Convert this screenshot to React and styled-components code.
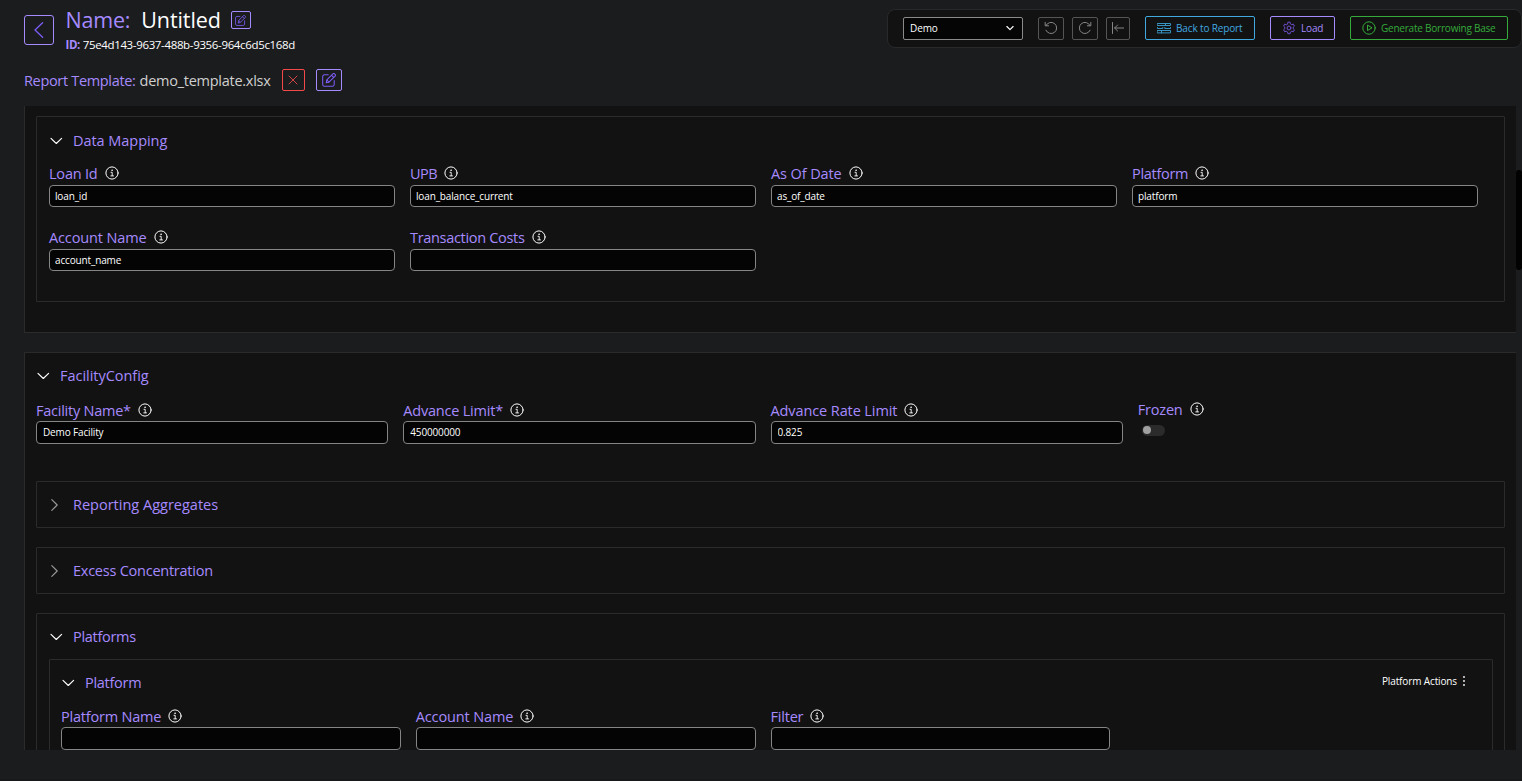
import { useState } from "react";
import styled, { createGlobalStyle } from "styled-components";

const GlobalStyle = createGlobalStyle`
    * {
        box-sizing: border-box;
    }

    body {
        margin: 0;
        background: #1b1c1e;
        color: #fff;
        font-family: "Open Sans", "Noto Sans", sans-serif;
        overflow: hidden;
    }

    button, input {
        font-family: inherit;
    }
`;

const Page = styled.div`
    height: 781px;
    display: flex;
    flex-direction: column;
    border-bottom: 2px solid #17181a;
`;

const Header = styled.header`
    height: 62px;
    display: flex;
    justify-content: space-between;
    align-items: flex-start;
    padding: 9px 0 0 24px;
`;

const Identity = styled.div`
    display: flex;

    .name {
        display: flex;
        align-items: center;
        height: 22px;
        font-size: 21.5px;
    }

    .name .label,
    .name .value {
        margin-top: -2px;
    }

    .name .label {
        letter-spacing: -0.2px;
        margin-right: 11px;
    }

    .name .value {
        letter-spacing: -0.1px;
        margin-right: 10px;
    }

    .label {
        color: #a68aff;
    }

    .id {
        height: 16px;
        line-height: 16px;
        margin-top: 6px;
        font-size: 11.5px;
        font-weight: 500;
        letter-spacing: -0.35px;
    }

    .id .label {
        font-weight: 700;
    }
`;

const BackButton = styled.button`
    width: 30px;
    height: 30px;
    margin: 6px 11.5px 0 0;
    padding: 0;
    display: flex;
    align-items: center;
    justify-content: center;
    border: 1px solid #a68aff;
    border-radius: 3px;
    background: transparent;
    color: #7d5cf5;
`;

const IconButton = styled.button`
    width: ${p => p.$w}px;
    height: ${p => p.$h}px;
    padding: 0;
    flex: none;
    display: flex;
    align-items: center;
    justify-content: center;
    border: 1px solid ${p => p.$border};
    border-radius: 2px;
    background: transparent;
    color: ${p => p.$color || p.$border};
`;

const Toolbar = styled.div`
    height: 39px;
    width: 635px;
    display: flex;
    align-items: center;
    padding: 0 0 1px 15px;
    border: 1px solid #28292b;
    border-radius: 8px;
    background: #121212;
`;

const Select = styled.div`
    width: 120px;
    height: 23px;
    flex: none;
    margin-right: 15px;
    display: flex;
    align-items: center;
    justify-content: space-between;
    padding: 0 8px 0 6px;
    border: 1px solid #8a8a8a;
    border-radius: 2px;
    background: #050505;
    font-size: 10px;
    letter-spacing: -0.1px;
`;

const History = styled.div`
    display: flex;
    gap: 8px;
    margin-right: 15px;
`;

const ActionButton = styled.button`
    width: ${p => p.$w}px;
    height: 24px;
    flex: none;
    padding: 0 0 0 11px;
    display: flex;
    align-items: center;
    gap: 5px;
    border: 1px solid ${p => p.$color};
    border-radius: 2px;
    background: transparent;
    color: ${p => p.$color};
    font-size: 10px;
    font-weight: 500;
    line-height: 14px;
    letter-spacing: ${p => p.$track || -0.14}px;
    white-space: nowrap;

    & + & {
        margin-left: 15px;
    }

    svg {
        color: ${p => p.$icon || p.$color};
    }
`;

const TemplateRow = styled.div`
    height: 44px;
    display: flex;
    align-items: flex-start;
    padding: 7px 0 0 24px;
    font-size: 14.5px;
    line-height: 23px;

    .label {
        color: #a68aff;
        letter-spacing: -0.33px;
        margin-right: 4px;
    }

    .file {
        color: #d0d0d0;
        letter-spacing: -0.26px;
        margin-right: 11px;
    }

    button + button {
        margin-left: 11px;
    }
`;

const Body = styled.div`
    display: flex;
    height: 644px;
    padding-left: 24px;
`;

const Content = styled.main`
    width: 1492px;
    height: 644px;
    overflow: hidden;
`;

const Scroll = styled.div`
    width: 6px;
    padding-top: 64px;
`;

const Thumb = styled.div`
    height: 100px;
    border-radius: 3px;
    background: #020202;
`;

const Panel = styled.section`
    height: ${p => p.$h}px;
    margin-bottom: ${p => p.$gap || 0}px;
    padding: ${p => p.$pad || "0 11px"};
    border: 1px solid #2b2b2b;
    border-width: ${p => p.$borders || "1px"};
    border-radius: ${p => p.$radius || 0}px;
    background: #121212;
`;

const SectionHead = styled.div`
    height: ${p => p.$h}px;
    display: flex;
    align-items: center;
    padding-left: ${p => p.$indent || 0}px;

    .chevron {
        width: 14px;
        height: 14px;
        margin-right: 10px;
        display: flex;
        align-items: center;
        color: ${p => (p.$open ? "#fff" : "#9a9a9a")};
    }

    .title {
        flex: 1;
        color: #a68aff;
        font-size: 14.5px;
        line-height: 20px;
        letter-spacing: ${p => p.$track || 0}px;
    }
`;

const Actions = styled.div`
    display: flex;
    align-items: center;
    gap: 4px;
    margin: -3px 25px 0 0;
    font-size: 10px;
    font-weight: 500;
    line-height: 14px;
    letter-spacing: -0.13px;
`;

const Fields = styled.div`
    display: grid;
    grid-template-columns: repeat(4, 1fr);
    column-gap: 15px;
    row-gap: 22px;
    padding: ${p => p.$pad};
`;

const FieldBox = styled.div`
    min-width: 0;

    .head {
        height: 20px;
        display: flex;
        align-items: center;
        gap: 7px;
        color: #a68aff;
        font-size: 14.5px;
        line-height: 18px;
        letter-spacing: ${p => p.$track || -0.08}px;
        white-space: nowrap;
    }

    .head span {
        margin-top: ${p => 2 * (p.$lift || 0)}px;
    }

    .head svg {
        color: #fff;
        margin-top: ${p => -3 + (p.$lift || 0)}px;
    }
`;

const Input = styled.input`
    display: block;
    width: 100%;
    height: ${p => p.$h}px;
    padding: ${p => (p.$h > 22 ? "0 6px 1px" : "0 5px 1px")};
    border: 1px solid #858585;
    border-radius: 4px;
    background: #040404;
    color: #fff;
    font-size: 10px;
    font-weight: 500;
    letter-spacing: -0.15px;
    outline: none;
`;

const Toggle = styled.button`
    display: flex;
    align-items: center;
    justify-content: ${p => (p.$on ? "flex-end" : "flex-start")};
    width: 23px;
    height: 11px;
    margin: 4px 0 0 4px;
    padding: 0 1px 1px;
    border: 0;
    border-radius: 6px;
    background: #2b2b2b;

    span {
        width: 8px;
        height: 8px;
        border-radius: 50%;
        background: #a0a0a0;
    }
`;

const Svg = ({ size = 14, height, box = 14, boxHeight, stroke = 1, children }) => (
    <svg width={size} height={height || size} viewBox={`0 0 ${box} ${boxHeight || box}`} fill="none" stroke="currentColor"
        strokeWidth={stroke} strokeLinecap="round" strokeLinejoin="round">
        {children}
    </svg>
);

const InfoIcon = () => (
    <Svg stroke={1}>
        <circle cx="7" cy="7" r="6.1" />
        <path d="M6 6.3h1.2v3.4M5.8 9.9h2.7" strokeWidth="0.9" />
        <circle cx="7" cy="4.2" r="0.3" fill="currentColor" strokeWidth="0.8" />
    </Svg>
);

const EditIcon = ({ size }) => (
    <Svg size={size} stroke={1.05}>
        <path d="M6.2 1.8H2.4C1.4 1.8 .7 2.5 .7 3.5v8.1c0 1 .7 1.7 1.7 1.7h8.1c1 0 1.7-.7 1.7-1.7V7.4" />
        <path d="M4.2 9.8l.6-2.9L10.9.9c.5-.5 1.2-.5 1.7 0l.5.5c.5.5.5 1.2 0 1.7L7 9.2z" />
        <path d="M9.6 2.3l2.1 2.1M5 7.2l1.8 1.8" />
    </Svg>
);

const UndoIcon = () => (
    <Svg stroke={1}>
        <path d="M1.9 4.7A5.6 5.6 0 1 1 1.9 9.2" />
        <path d="M1.2 1.4v3.4h3.4" />
    </Svg>
);

const RedoIcon = () => (
    <Svg stroke={1}>
        <path d="M12.1 4.7A5.6 5.6 0 1 0 12.1 9.2" />
        <path d="M12.8 1.4v3.4H9.4" />
    </Svg>
);

const ResetIcon = () => (
    <Svg stroke={1}>
        <path d="M1.5 1.5v11M12.6 7H3.6M6.6 4L3.6 7l3 3" />
    </Svg>
);

const BricksIcon = () => (
    <Svg size={14} height={12} box={14} boxHeight={12}>
        <path d="M.5 1.5h13v2H.5zM8.5 1.5v2M.5 5.5v1h5.3v-1M7.8 5.5v1h5.7v-1M.5 8.5h13v2.4H.5zM4.5 8.5v2.4" />
    </Svg>
);

const GearIcon = () => (
    <Svg size={14} box={24} stroke={1.6}>
        <path d="M9.6 4.9 10.1 2h3.8l.5 2.9 2.4 1.4 2.6-1 1.9 3.4-2.1 1.8v2.8l2.1 1.8-1.9 3.4-2.6-1-2.4 1.4-.5 2.9h-3.8l-.5-2.9-2.4-1.4-2.6 1-1.9-3.4 2.1-1.8v-2.8L2.7 8.7l1.9-3.4 2.6 1z" />
        <circle cx="12" cy="12" r="3.3" />
    </Svg>
);

const PlayIcon = () => (
    <Svg>
        <circle cx="7" cy="7" r="6.2" />
        <path d="M5.5 4.5v5L9.7 7z" />
    </Svg>
);

const Chevron = ({ open }) => (
    <Svg stroke={1.15}>{open ? <path d="M2 4.3l5.3 5.2 5.3-5.2" /> : <path d="M2.8 1.6L8.2 7l-5.4 5.4" />}</Svg>
);

const Section = ({ title, open, h, indent, track, children }) => (
    <SectionHead $h={h} $indent={indent} $open={open} $track={track}>
        <span className="chevron"><Chevron open={open} /></span>
        <span className="title">{title}</span>
        {children}
    </SectionHead>
);

const Field = ({ label, value = "", track, lift, h = 22, children }) => (
    <FieldBox $track={track} $lift={lift}>
        <div className="head"><span>{label}</span> <InfoIcon /></div>
        {children || <Input $h={h} defaultValue={value} />}
    </FieldBox>
);

const mappings = [
    { label: "Loan Id", value: "loan_id", track: -0.2 },
    { label: "UPB", value: "loan_balance_current", track: -0.5 },
    { label: "As Of Date", value: "as_of_date", track: -0.1 },
    { label: "Platform", value: "platform", track: -0.3 },
    { label: "Account Name", value: "account_name", track: -0.12 },
    { label: "Transaction Costs", track: -0.31 },
];

const App = () => {
    const [frozen, setFrozen] = useState(false);

    return (
        <Page>
            <GlobalStyle />
            <Header>
                <Identity>
                    <BackButton>
                        <Svg size={16} box={16} stroke={1.3}><path d="M11.6 .8L4 8l7.6 7.2" /></Svg>
                    </BackButton>
                    <div>
                        <div className="name">
                            <span className="label">Name:</span>
                            <span className="value">Untitled</span>
                            <IconButton $w={20} $h={18} $border="#a68aff" $color="#7d5cf5"><EditIcon size={11} /></IconButton>
                        </div>
                        <div className="id"><span className="label">ID:</span> 75e4d143-9637-488b-9356-964c6d5c168d</div>
                    </div>
                </Identity>
                <Toolbar>
                    <Select>
                        Demo
                        <Svg size={8} box={9} stroke={1.3}><path d="M1 2.8L4.5 6.3 8 2.8" /></Svg>
                    </Select>
                    <History>
                        <IconButton $w={26} $h={23} $border="#555" $color="#858585"><UndoIcon /></IconButton>
                        <IconButton $w={26} $h={23} $border="#555" $color="#858585"><RedoIcon /></IconButton>
                        <IconButton $w={24} $h={23} $border="#555" $color="#858585"><ResetIcon /></IconButton>
                    </History>
                    <ActionButton $w={110} $color="#41a9e0" $icon="#3793c2"><BricksIcon />Back to Report</ActionButton>
                    <ActionButton $w={65} $color="#a68aff" $icon="#7553d8"><GearIcon />Load</ActionButton>
                    <ActionButton $w={158} $color="#35ab3b" $track={-0.22}><PlayIcon />Generate Borrowing Base</ActionButton>
                </Toolbar>
            </Header>

            <TemplateRow>
                <span className="label">Report Template:</span>
                <span className="file">demo_template.xlsx</span>
                <IconButton $w={23} $h={22} $border="#f5484a" $color="#d54545">
                    <Svg size={10} box={10}><path d="M1 1l8 8M9 1L1 9" /></Svg>
                </IconButton>
                <IconButton $w={26} $h={22} $border="#a68aff" $color="#7d5cf5"><EditIcon size={14} /></IconButton>
            </TemplateRow>

            <Body>
                <Content>
                    <Panel $h={227} $gap={19} $borders="0 0 1px 1px" $pad="10px 11px 0">
                        <Panel $h={186} $pad="0" $radius={1}>
                            <Section title="Data Mapping" open h={47} indent={12} track={-0.05} />
                            <Fields $pad="1px 26px 0 12px">
                                {mappings.map(m => <Field key={m.label} lift={-1} {...m} />)}
                            </Fields>
                        </Panel>
                    </Panel>

                    <Panel $h={500} $borders="1px 0 0 1px" $radius={1}>
                        <Section title="FacilityConfig" open h={46} track={-0.03} />
                        <Fields $pad="2px 15px 37px 0">
                            <Field label="Facility Name*" value="Demo Facility" track={-0.24} h={23} />
                            <Field label="Advance Limit*" value="450000000" track={-0.2} h={23} />
                            <Field label="Advance Rate Limit" value="0.825" track={-0.1} h={23} />
                            <Field label="Frozen" track={-0.2} lift={-1}>
                                <Toggle $on={frozen} onClick={() => setFrozen(!frozen)}><span /></Toggle>
                            </Field>
                        </Fields>
                        <Panel $h={47} $gap={19} $pad="0" $radius={1}>
                            <Section title="Reporting Aggregates" h={45} indent={12} />
                        </Panel>
                        <Panel $h={47} $gap={19} $pad="0" $radius={1}>
                            <Section title="Excess Concentration" h={45} indent={12} track={-0.24} />
                        </Panel>
                        <Panel $h={200} $pad="0 11px 0 12px" $radius={1}>
                            <Section title="Platforms" open h={45} track={-0.3} />
                            <Panel $h={150} $pad="0 0 0 11px" $radius={1}>
                                <Section title="Platform" open h={45} track={-0.28}>
                                    <Actions>
                                        Platform Actions
                                        <svg width="6" height="12" viewBox="0 0 6 12" fill="currentColor">
                                            <circle cx="3" cy="2" r="0.9" />
                                            <circle cx="3" cy="6" r="0.9" />
                                            <circle cx="3" cy="10" r="0.9" />
                                        </svg>
                                    </Actions>
                                </Section>
                                <Fields $pad="2px 27px 0 0">
                                    <Field label="Platform Name" track={-0.2} h={23} />
                                    <Field label="Account Name" track={-0.12} h={23} />
                                    <Field label="Filter" track={-0.2} h={23} />
                                </Fields>
                            </Panel>
                        </Panel>
                    </Panel>
                </Content>
                <Scroll><Thumb /></Scroll>
            </Body>
        </Page>
    );
};

export default App;
